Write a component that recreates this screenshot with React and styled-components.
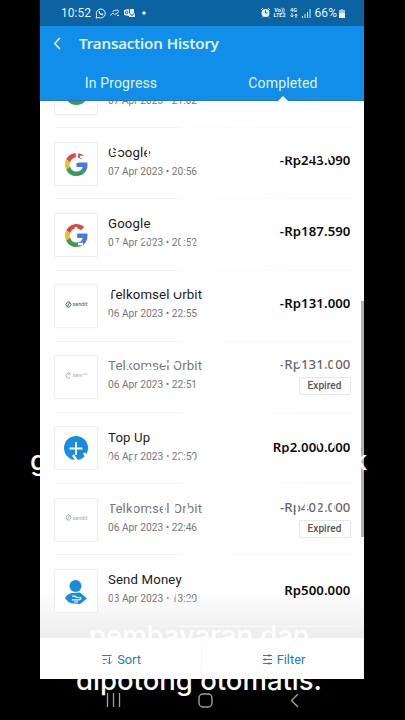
import React from 'react';
import styled, { createGlobalStyle } from 'styled-components';

const Global = createGlobalStyle`
  * { box-sizing: border-box; }
  body { margin: 0; background: #000; overflow: hidden; }
`;
const Stage = styled.main`
  position: relative; width: 405px; height: 720px; padding: 0 41px 0 40px;
  background: #000; overflow: hidden; font-family: Roboto, sans-serif;
`;
const Screen = styled.div`
  position: relative; width: 324px; height: 679px; margin-bottom: 1px; background: #fff; display: flex; flex-direction: column;
`;
const Status = styled.div`
  flex: none; height: 26px; background: #0c63a1; color: #e3f2fb; display: flex;
  align-items: center; justify-content: space-between; padding: 0 19px 0 21px;
  font-size: 12px; letter-spacing: .05px;
`;
const StatusSide = styled.div`display: flex; align-items: center; gap: ${p => p.$gap}px;`;
const Tiny = styled.span`
  display: flex; flex-direction: column; align-items: center;
  font: 700 5.5px/5.5px Roboto, sans-serif; letter-spacing: 0;
`;
const Header = styled.header`flex: none; height: 75px; background: #118eea; color: #fff; border-bottom: 1px solid #2b75b0;`;
const TitleBar = styled.div`height: 34px; display: flex; align-items: center; gap: 18px; padding-left: 13px;`;
const Heading = styled.h1`margin: 0; font: 500 15.2px/20px "Noto Sans", sans-serif; letter-spacing: -.05px; color: #e9f7ff; -webkit-text-stroke: .15px #e9f7ff;`;
const Tabs = styled.nav`height: 41px; display: grid; grid-template: 41px / 1fr 1fr;`;
const Tab = styled.div`
  position: relative; text-align: center; font-size: 14px; line-height: 46px; color: #e2f3ff; letter-spacing: .15px;
  &::after {
    content: ''; display: ${p => (p.$active ? 'block' : 'none')}; position: absolute; left: 50%; bottom: 0;
    margin-left: -5px; border: 5px solid transparent; border-top: 0; border-bottom-color: #fff;
  }
`;
const List = styled.section`flex: none; height: 537px; overflow: hidden; background: linear-gradient(#fff 91%, #ececec 100%);`;
const Rows = styled.div`margin-top: -44px;`;
const Row = styled.article`
  height: 71.2px; display: flex; padding: 13.5px 13.5px 0 14px;
  background: linear-gradient(90deg, transparent 16px, #f3f3f3 16px, #f3f3f3 140px, #fdfdfd 140px, #f7f7f7 311px, transparent 311px) 0 100% / 100% 1px no-repeat;
`;
const Logo = styled.div`
  flex: none; width: 44px; height: 44px; border: 1px solid #eee; border-radius: 2px; background: #fff;
  display: flex; align-items: center; justify-content: center; padding-top: 2px; box-shadow: 0 0 2px #f3f3f3;
`;
const Details = styled.div`margin-left: 10px; flex: 1; padding-top: ${p => 1 + (p.$drop ? 0.5 : 0)}px; white-space: nowrap;`;
const Name = styled.div`min-height: 19px; font-size: 13.2px; line-height: 19px; letter-spacing: .15px; color: ${p => (p.$muted ? '#777' : '#1b1b1b')};`;
const When = styled.div`font-size: 10.2px; line-height: 20px; color: #777;`;
const Side = styled.div`display: flex; flex-direction: column; align-items: flex-end; padding-top: ${p => (p.$muted ? 0 : 9.5 + (p.$drop || 0))}px;`;
const Amount = styled.div`
  font: ${p => (p.$muted ? 500 : 600)} 13.2px/19px "Noto Sans", sans-serif; letter-spacing: ${p => (p.$muted ? 0.1 : 0.08)}px;
  color: ${p => (p.$muted ? '#686868' : '#0b0b0b')};
`;
const Badge = styled.span`
  width: 52px; height: 18px; margin-top: 3px; border: 1px solid #e6e6e6; border-radius: 2px;
  text-align: center; font: 500 10px/16px Roboto, sans-serif; color: #555; letter-spacing: .1px;
`;
const Xendit = styled.div`
  display: flex; align-items: center; gap: 1px; font: 5.5px/6px Roboto, sans-serif; margin-top: -6px;
  color: #46546a; opacity: ${p => (p.$muted ? 0.5 : 1)};
`;
const Actions = styled.footer`flex: 1; background: #fff; display: grid; grid-template-columns: 1fr 1fr;`;
const Action = styled.div`
  display: flex; align-items: center; justify-content: center; gap: 4px; color: #2380b3; padding: 1px 0 0 2px;
  font-size: 12.8px; border-right: 1px solid #f6f6f6;
`;
const Nav = styled.div`
  height: 40px; display: flex; align-items: center; justify-content: space-between; padding: 0 65px 0 66px;
`;
const Thumb = styled.div`position: absolute; left: 361px; top: 301px; width: 3px; height: 236px; background: #b1b1b1;`;
const Caption = styled.div`
  position: absolute; left: ${p => p.$x}px; top: ${p => p.$y}px; white-space: nowrap;
  color: #fff; font: 500 27.5px/32px Inter, sans-serif;
`;
const Traces = styled.svg`position: absolute; left: 0; top: 0; pointer-events: none;`;

function Google() {
  return (
    <svg width="23" height="23" viewBox="0 0 48 48">
      <path fill="#dc4b40" d="M24 9.5c3.5 0 6.7 1.2 9.2 3.6l6.9-6.9A24 24 0 0 0 2.6 13.2l8 6.2C12.4 13.7 17.7 9.5 24 9.5z" />
      <path fill="#467bd8" d="M47 24.5c0-1.6-.2-3.1-.4-4.5H24v9h12.9c-.6 3-2.3 5.5-4.8 7.2l7.7 6C44.4 38 47 31.8 47 24.5z" />
      <path fill="#efbd2c" d="M10.5 28.6a14 14 0 0 1 0-9.2l-8-6.2a24 24 0 0 0 0 21.6z" />
      <path fill="#399b55" d="M24 48c6.5 0 11.9-2.1 15.9-5.8l-7.7-6A14.2 14.2 0 0 1 10.5 28.6l-8 6.2A24 24 0 0 0 24 48z" />
    </svg>
  );
}
function Mark({ kind }) {
  if (kind === 'google') return <Google />;
  if (kind === 'topup') return (
    <svg width="26" height="26" viewBox="0 0 26 26">
      <circle cx="13" cy="12" r="12" fill="#168de1" />
      <path d="M13 6v13M6.5 12.5h13" stroke="#fff" strokeWidth="1.8" />
    </svg>
  );
  if (kind === 'send') return (
    <svg width="22" height="26" viewBox="0 0 22 26">
      <circle cx="10.5" cy="7" r="6" fill="#168de1" />
      <path d="M0 19Q3 14 8 14l7-.5 7 6-7 5.5-7-.5Q3 24 0 19z" fill="#168de1" />
      <path d="M7 17.2h3l2 1.3h4M7 20.8h6q3 0 3-2M9 23h4" fill="none" stroke="#fff" strokeWidth="1.2" />
    </svg>
  );
  return (
    <Xendit $muted={kind === 'faded'}>
      <svg width="7" height="7" viewBox="0 0 7 8"><path d="M2.5 1h2L6.5 4 4.5 7h-2L.5 4 2.5 1M2 6.5 5 1.5" fill="none" stroke="currentColor" /></svg>
      xendit
    </Xendit>
  );
}

const items = [
  { kind: 'google', name: '', when: '07 Apr 2023 • 21:02', amount: '' },
  { kind: 'google', name: 'Google', when: '07 Apr 2023 • 20:56', amount: '-Rp243.090' },
  { kind: 'google', name: 'Google', when: '07 Apr 2023 • 20:52', amount: '-Rp187.590' },
  { kind: 'xendit', name: 'Telkomsel Orbit', when: '06 Apr 2023 • 22:55', amount: '-Rp131.000' },
  { kind: 'faded', name: 'Telkomsel Orbit', when: '06 Apr 2023 • 22:51', amount: '-Rp131.000', expired: true },
  { kind: 'topup', name: 'Top Up', when: '06 Apr 2023 • 22:50', amount: 'Rp2.000.000', drop: 2 },
  { kind: 'faded', name: 'Telkomsel Orbit', when: '06 Apr 2023 • 22:46', amount: '-Rp402.000', expired: true },
  { kind: 'send', name: 'Send Money', when: '03 Apr 2023 • 13:20', amount: 'Rp500.000', drop: 2.5 },
];

export default function App() {
  return (
    <Stage>
      <Global />
      <Caption $x={76} $y={664}>dipotong otomatis.</Caption>
      <Screen>
        <Status>
          <StatusSide $gap={4}>
            <span>10:52</span>
            <svg width="11" height="11" viewBox="0 0 22 22" fill="none" stroke="currentColor" strokeWidth="2">
              <path d="M2 20l1.5-5a9 9 0 1 1 4 4z" /><path d="M7 6q0 7 8 9l2-3-3-1.5-1.5 1Q10 10 9.5 8.5L10 6z" fill="currentColor" stroke="none" />
            </svg>
            <svg width="10" height="8" viewBox="0 0 10 8" fill="none" stroke="currentColor"><path d="M.5 6.5Q2 3.5 4 4.5M2.5 2.500q6-3 6 0-1 2.500-4 3M7 6.500h2" /></svg>
            <svg width="11" height="10" viewBox="0 0 11 10"><path d="M0 2l5-1v7L0 7zM6 1h4v4H6zM5 5h6v4H5z" fill="currentColor" /><circle cx="2.600" cy="4.500" r="1.200" fill="none" stroke="#0c63a1" /><path d="m5.500 5.500 2.500 2 2.500-2" stroke="#0c63a1" fill="none" /></svg>
            <svg width="10" height="6" viewBox="0 0 10 6"><circle cx="5" cy="3" r="1.800" fill="currentColor" /></svg>
          </StatusSide>
          <StatusSide $gap={4}>
            <svg width="9" height="10" viewBox="0 0 9 10"><circle cx="4.500" cy="5" r="4" fill="currentColor" /><path d="M0 2 2 0M9 2 7 0M1 9.500l1-1M8 9.500l-1-1" stroke="currentColor" /><path d="M4.500 2.500V5H6.500" fill="none" stroke="#0c63a1" /></svg>
            <Tiny><span>Vo))</span><span>LTE2</span></Tiny>
            <Tiny><span>4G</span><svg width="8" height="5" viewBox="0 0 8 5"><path d="M2 0v4M.5 2.500 2 4l1.500-1.500M6 5V1M4.500 2.500 6 1l1.500 1.500" fill="none" stroke="currentColor" /></svg></Tiny>
            <svg width="9" height="9" viewBox="0 0 9 9" fill="currentColor"><path d="M0 7h1v2H0zM2.500 5h1v4h-1zM5 3h1v6H5zM7.500 0h1v9h-1z" /></svg>
            <StatusSide $gap={2}><span>66%</span>
              <svg width="6" height="9" viewBox="0 0 6 9"><path d="M2 0h2v1h2v8H0V1h2z" fill="#9cc6e4" /><path d="M0 4h6v5H0z" fill="#eef8ff" /></svg>
            </StatusSide>
          </StatusSide>
        </Status>
        <Header>
          <TitleBar>
            <svg width="8" height="13" viewBox="0 0 8 13"><path d="M6.800 1 1.800 6.500l5 5.500" fill="none" stroke="#e6f6ff" strokeWidth="1.600" /></svg>
            <Heading>Transaction History</Heading>
          </TitleBar>
          <Tabs><Tab>In Progress</Tab><Tab $active>Completed</Tab></Tabs>
        </Header>
        <List>
          <Rows>
            {items.map(({ kind, name, when, amount, expired, drop }, i) => (
              <Row key={i}>
                <Logo><Mark kind={kind} /></Logo>
                <Details $drop={kind === 'topup'}><Name $muted={expired}>{name}</Name><When>{when}</When></Details>
                <Side $muted={expired} $drop={drop}><Amount $muted={expired}>{amount}</Amount>{expired && <Badge>Expired</Badge>}</Side>
              </Row>
            ))}
          </Rows>
        </List>
        <Actions>
          <Action>
            <svg width="11" height="12" viewBox="0 0 11 12" fill="none" stroke="currentColor"><path d="M0 2.500h9.500M1 6.500h4M1 10.500h2M7.500 4v7M5 8.500 7.500 11 10 8.500" /></svg>
            Sort
          </Action>
          <Action>
            <svg width="11" height="12" viewBox="0 0 11 12" fill="none" stroke="currentColor"><path d="M1 2.500h9M1 6.500h9M1 10.500h9" /><path d="M7 1.500v2M3 5.500v2M7 9.500v2" strokeWidth="1.500" /></svg>
            Filter
          </Action>
        </Actions>
      </Screen>
      <Thumb />
      <Nav>
        <svg width="15" height="15" viewBox="0 0 15 15"><path d="M1.500 0v14M7.500 0v14M13.500 0v14" stroke="#a0a0a0" strokeWidth="1.300" /></svg>
        <svg width="15" height="15" viewBox="0 0 15 15"><rect x="1" y="1" width="13" height="13" rx="4" fill="none" stroke="#a0a0a0" strokeWidth="1.400" /></svg>
        <svg width="9" height="15" viewBox="0 0 9 15"><path d="m8 1-6.500 6.500L8 14" fill="none" stroke="#a0a0a0" strokeWidth="1.400" /></svg>
      </Nav>
      <Traces width="405" height="720" fill="none" stroke="#fff" strokeWidth="2.400">
        <path d="M112 147v9M120 153l-5 1M148 146v12M77 151v12M80 157h7M284 155l12 1M300 154v6M312 155v5M323 155v5M330 154v6" />
        <path d="M76 227v15M78 244h5M114 238l3 9M122 237v10M143 240h5M152 241v6M182 238v9M192 241v7M286 238h8M303 235v7M311 239h9" />
        <path d="M107 291h5M172 291h9M110 315v4M115 316v4M110 374h31M128 360v9M143 368h14M162 364h14M185 370v5M156 386v4M284 362v9M299 362v5M308 371h11M322 370h7M334 359v11M67 376h5M82 376h6" />
        <path d="M64 457l5 5M73 455l4 6M84 453l4 6M110 455v5M121 453v10M133 455v9M166 455v5M181 453v10M193 455v7M279 455h13M300 443v6M319 443v5M333 443v5" />
        <path d="M109 504v12M133 501v14M149 510h5M164 501v14M174 501v14M186 504l3 9M297 502v10M306 503v9M317 503v11M324 504v10M333 501v11M114 594v7M121 593v9M166 592v9M174 592v5M185 600h9" />
      </Traces>
      <Caption $x={30} $y={444}>g</Caption>
      <Caption $x={352} $y={444}>k</Caption>
      <Caption $x={89} $y={619}>pembayaran dan</Caption>
    </Stage>
  );
}
